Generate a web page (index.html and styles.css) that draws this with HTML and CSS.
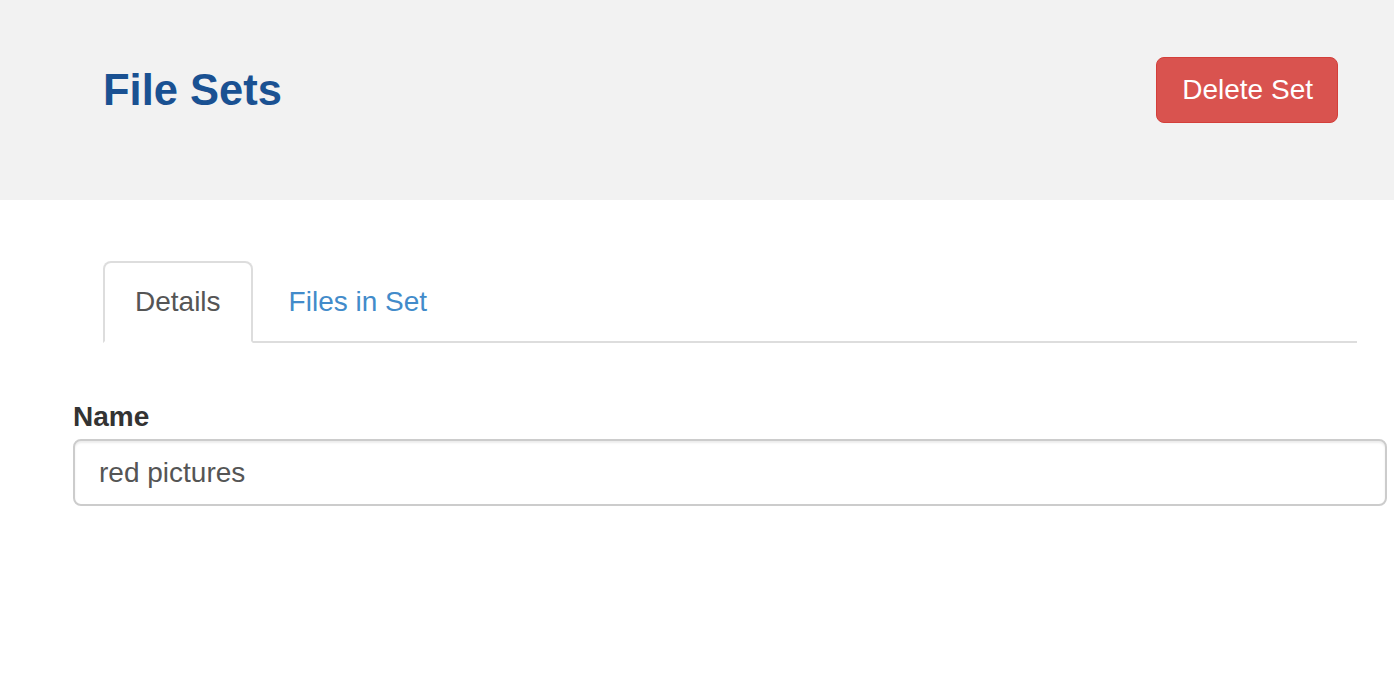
FILE: index.html
```html
<!DOCTYPE html>
<html>
<head>
<meta charset="utf-8">
<link rel="stylesheet" href="styles.css">
</head>
<body>
<header class="page-header">
  <h1 class="title">File Sets</h1>
  <button class="btn-danger">Delete Set</button>
</header>
<main class="content">
  <ul class="nav-tabs">
    <li class="tab active"><a>Details</a></li>
    <li class="tab"><a class="link">Files in Set</a></li>
  </ul>
  <div class="form-group">
    <label class="label">Name</label>
    <input class="input" type="text" value="red pictures">
  </div>
</main>
</body>
</html>
```
FILE: styles.css
```css
html, body {
  margin: 0;
  padding: 0;
  background: #fff;
  font-family: "Liberation Sans", Arial, sans-serif;
  color: #333;
}
.page-header {
  height: 200px;
  box-sizing: border-box;
  background: #f2f2f2;
  display: flex;
  align-items: center;
  justify-content: space-between;
  padding: 0 56px 21px 103px;
}
.title {
  margin: 0;
  font-size: 43.5px;
  line-height: 48px;
  font-weight: bold;
  color: #1a5192;
}
.btn-danger {
  font-family: inherit;
  font-size: 28px;
  line-height: 40px;
  padding: 12px 24px 12px 25px;
  color: #fff;
  background: #d9534f;
  border: 1px solid #d43f3a;
  border-radius: 8px;
  cursor: pointer;
}
.content {
  padding: 61px 7px 0 73px;
}
.nav-tabs {
  list-style: none;
  margin: 0 30px;
  padding: 0;
  display: flex;
  border-bottom: 2px solid #ddd;
}
.tab {
  margin-right: 4px;
  margin-bottom: -2px;
}
.tab a {
  display: block;
  font-size: 28px;
  line-height: 40px;
  padding: 19px 30px 19px 30px;
  border: 2px solid transparent;
  border-radius: 8px 8px 0 0;
}
.tab.active a {
  color: #555;
  background: #fff;
  border-color: #ddd #ddd transparent #ddd;
}
.tab .link {
  color: #428bca;
}
.form-group {
  margin-top: 54px;
}
.label {
  display: block;
  font-size: 28px;
  line-height: 40px;
  font-weight: bold;
  color: #333;
  margin-bottom: 2px;
}
.input {
  display: block;
  width: 100%;
  box-sizing: border-box;
  height: 67px;
  padding: 12px 24px;
  font-family: inherit;
  font-size: 28px;
  color: #555;
  border: 2px solid #ccc;
  border-radius: 8px;
  box-shadow: inset 0 2px 2px rgba(0,0,0,0.075);
  outline: none;
}
```
